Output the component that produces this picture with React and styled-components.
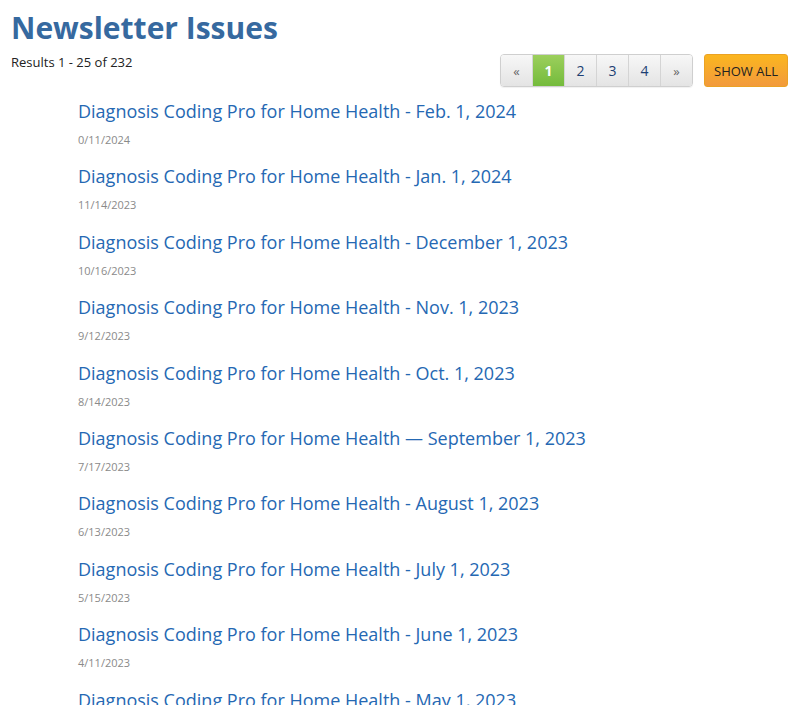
import React from "react";
import styled, { createGlobalStyle } from "styled-components";

const issues = [
  ["Diagnosis Coding Pro for Home Health - Feb. 1, 2024", "0/11/2024"],
  ["Diagnosis Coding Pro for Home Health - Jan. 1, 2024", "11/14/2023"],
  ["Diagnosis Coding Pro for Home Health - December 1, 2023", "10/16/2023"],
  ["Diagnosis Coding Pro for Home Health - Nov. 1, 2023", "9/12/2023"],
  ["Diagnosis Coding Pro for Home Health - Oct. 1, 2023", "8/14/2023"],
  ["Diagnosis Coding Pro for Home Health \u2014 September 1, 2023", "7/17/2023"],
  ["Diagnosis Coding Pro for Home Health - August 1, 2023", "6/13/2023"],
  ["Diagnosis Coding Pro for Home Health - July 1, 2023", "5/15/2023"],
  ["Diagnosis Coding Pro for Home Health - June 1, 2023", "4/11/2023"],
  ["Diagnosis Coding Pro for Home Health - May 1, 2023", "3/13/2023"],
];

const pages = ["\u00ab", "1", "2", "3", "4", "\u00bb"];

function App() {
  return (
    <>
      <GlobalStyle />
      <Page>
        <Title>Newsletter Issues</Title>
        <Toolbar>
          <Results>Results 1 - 25 of 232</Results>
          <Controls>
            <Pager>
              {pages.map((p) => (
                <PageCell key={p} active={p === "1"} arrow={p === "\u00ab" || p === "\u00bb"}>
                  {p}
                </PageCell>
              ))}
            </Pager>
            <ShowAll>SHOW ALL</ShowAll>
          </Controls>
        </Toolbar>
        <List>
          {issues.map(([title, date]) => (
            <Item key={title}>
              <IssueLink href="#">{title}</IssueLink>
              <IssueDate>{date}</IssueDate>
            </Item>
          ))}
        </List>
      </Page>
    </>
  );
}

const GlobalStyle = createGlobalStyle`
  body {
    margin: 0;
    font-family: "Open Sans", "Liberation Sans", sans-serif;
    background: #fff;
    overflow: hidden;
  }
`;

const Page = styled.div`
  padding: 7px 8px 0 11px;
`;

const Title = styled.h1`
  margin: 0;
  font-size: 30px;
  line-height: 42px;
  font-weight: 700;
  color: #36699f;
`;

const Toolbar = styled.div`
  display: flex;
  justify-content: space-between;
  align-items: flex-start;
`;

const Results = styled.div`
  font-size: 13px;
  color: #222;
  margin-top: 4px;
`;

const Controls = styled.div`
  display: flex;
  align-items: flex-start;
  gap: 11px;
  margin-top: 5px;
`;

const Pager = styled.div`
  display: flex;
  border: 1px solid #cfcfcf;
  border-radius: 4px;
  overflow: hidden;
  box-shadow: 0 1px 1px rgba(0, 0, 0, 0.06);
`;

const PageCell = styled.span`
  width: 31px;
  height: 31px;
  display: flex;
  align-items: center;
  justify-content: center;
  font-size: ${(p) => (p.arrow ? "13px" : "14px")};
  font-weight: ${(p) => (p.active ? 700 : 400)};
  color: ${(p) => (p.active ? "#fff" : p.arrow ? "#666" : "#1d3f73")};
  background: ${(p) =>
    p.active
      ? "linear-gradient(#9ccf5c, #74bb3c)"
      : "linear-gradient(#f7f7f7, #e4e4e4)"};
  & + & {
    border-left: 1px solid #d4d4d4;
  }
`;

const ShowAll = styled.button`
  height: 33px;
  padding: 0 9px;
  border: 1px solid #eba224;
  border-radius: 3px;
  background: linear-gradient(#fbb61f, #f29a3c);
  font-family: inherit;
  font-size: 13px;
  color: #222;
`;

const List = styled.ul`
  list-style: none;
  margin: 11px 0 0;
  padding: 0 0 0 67px;
`;

const Item = styled.li`
  height: 65.4px;
`;

const IssueLink = styled.a`
  display: block;
  font-size: 18px;
  line-height: 26px;
  color: #2568b3;
  text-decoration: none;
`;

const IssueDate = styled.div`
  font-size: 11px;
  line-height: 16px;
  margin-top: 8px;
  color: #8a8a8a;
`;

export default App;
